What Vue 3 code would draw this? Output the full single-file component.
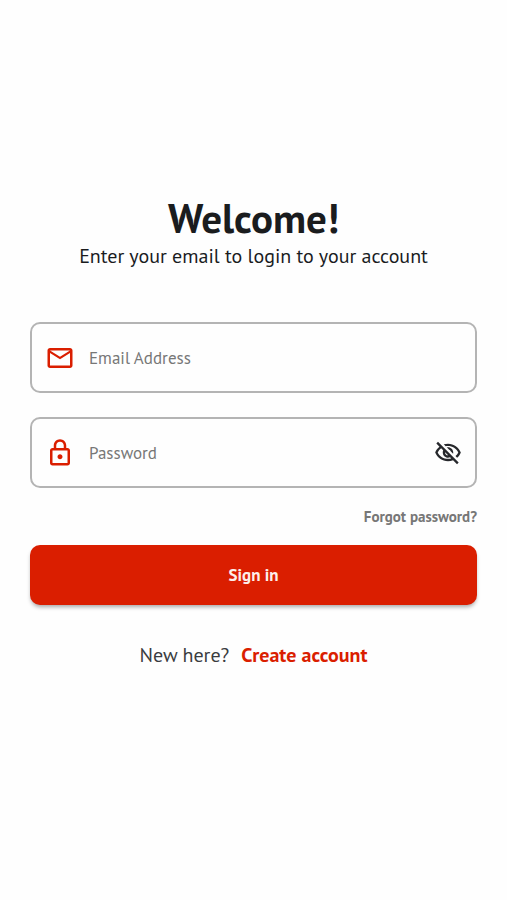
<template>
  <main class="login">
    <header class="login-header">
      <h1 class="title">Welcome!</h1>
      <p class="subtitle">Enter your email to login to your account</p>
    </header>

    <form class="login-form" @submit.prevent="signIn">
      <div class="fields">
        <label class="field">
          <svg class="icon" viewBox="0 0 24 24" aria-hidden="true">
            <path d="M22 6c0-1.1-.9-2-2-2H4c-1.1 0-2 .9-2 2v12c0 1.1.9 2 2 2h16c1.1 0 2-.9 2-2V6zm-2 0l-8 5-8-5h16zm0 12H4V8l8 5 8-5v10z" />
          </svg>
          <input v-model="email" type="email" placeholder="Email Address" aria-label="Email Address" />
        </label>

        <div class="field">
          <svg class="icon" viewBox="0 0 24 24" aria-hidden="true">
            <path d="M18 8h-1V6c0-2.76-2.24-5-5-5S7 3.24 7 6v2H6c-1.1 0-2 .9-2 2v10c0 1.1.9 2 2 2h12c1.1 0 2-.9 2-2V10c0-1.1-.9-2-2-2zM9 6c0-1.66 1.34-3 3-3s3 1.34 3 3v2H9V6zm9 14H6V10h12v10zm-6-3c1.1 0 2-.9 2-2s-.9-2-2-2-2 .9-2 2 .9 2 2 2z" />
          </svg>
          <input
            v-model="password"
            :type="showPassword ? 'text' : 'password'"
            placeholder="Password"
            aria-label="Password"
          />
          <button
            type="button"
            class="toggle-btn"
            aria-label="Toggle password visibility"
            @click="showPassword = !showPassword"
          >
            <svg viewBox="0 0 24 24" aria-hidden="true">
              <path v-if="showPassword" d="M12 6c3.79 0 7.17 2.13 8.82 5.5C19.17 14.87 15.79 17 12 17s-7.17-2.13-8.82-5.5C4.83 8.13 8.21 6 12 6m0-2C7 4 2.73 7.11 1 11.5 2.73 15.89 7 19 12 19s9.27-3.11 11-7.5C21.27 7.11 17 4 12 4zm0 5a2.5 2.5 0 0 1 0 5 2.5 2.5 0 0 1 0-5m0-2a4.5 4.5 0 1 0 0 9 4.5 4.5 0 0 0 0-9z" />
              <path v-else d="M12 6c3.79 0 7.17 2.13 8.82 5.5-.59 1.22-1.42 2.27-2.41 3.12l1.41 1.41c1.39-1.23 2.49-2.77 3.18-4.53C21.27 7.11 17 4 12 4c-1.27 0-2.49.2-3.64.57l1.65 1.65C10.66 6.09 11.32 6 12 6zm-1.07 1.14L13 9.21c.57.25 1.03.71 1.28 1.28l2.07 2.07c.08-.34.14-.7.14-1.07C16.5 9.01 14.48 7 12 7c-.37 0-.72.05-1.07.14zM2.01 3.87l2.68 2.68C3.06 7.83 1.77 9.53 1 11.5 2.73 15.89 7 19 12 19c1.52 0 2.98-.29 4.32-.82l3.42 3.42 1.41-1.41L3.42 2.45 2.01 3.87zm7.5 7.5l2.61 2.61c-.04.01-.08.02-.12.02-1.38 0-2.5-1.12-2.5-2.5 0-.05.01-.08.01-.13zm-3.4-3.4l1.75 1.75c-.23.55-.36 1.15-.36 1.78 0 2.48 2.02 4.5 4.5 4.5.63 0 1.23-.13 1.77-.36l.98.98c-.88.24-1.8.38-2.75.38-3.79 0-7.17-2.13-8.82-5.5.7-1.43 1.72-2.61 2.93-3.53z" />
            </svg>
          </button>
        </div>
      </div>

      <a class="forgot" href="#">Forgot password?</a>

      <button class="submit-btn" type="submit">Sign in</button>
    </form>

    <p class="signup">
      <span>New here?</span>
      <a href="#">Create account</a>
    </p>
  </main>
</template>

<script setup>
import { ref } from "vue";

const emit = defineEmits(["sign-in"]);

const email = ref("");
const password = ref("");
const showPassword = ref(false);

const signIn = () => {
  if (!email.value || !password.value) return;
  emit("sign-in", { email: email.value, password: password.value });
};
</script>

<style>
body {
  margin: 0;
  background: #fefefe;
}
</style>

<style scoped>
.login {
  min-height: 100vh;
  box-sizing: border-box;
  padding: 24px 30px 61px;
  display: flex;
  flex-direction: column;
  justify-content: center;
  font-family: "PT Sans", "Noto Sans", sans-serif;
  color: #1a1c1e;
}

.login-header {
  margin-bottom: 52px;
  text-align: center;
}

.title {
  margin: 0;
  font-size: 41px;
  line-height: 48px;
  font-weight: 700;
}

.subtitle {
  margin: 0;
  font-size: 20px;
  line-height: 28px;
}

.login-form {
  display: flex;
  flex-direction: column;
}

.fields {
  display: flex;
  flex-direction: column;
  gap: 24px;
  margin-bottom: 19px;
}

.field {
  display: flex;
  align-items: center;
  height: 71px;
  box-sizing: border-box;
  padding: 0 13px;
  border: 2px solid #b4b4b4;
  border-radius: 10px;
}

.field:focus-within {
  border-color: #da1e00;
}

.icon {
  flex: none;
  width: 30px;
  height: 30px;
  margin-right: 14px;
  fill: #da1e00;
}

.field input {
  flex: 1;
  min-width: 0;
  padding: 0;
  border: none;
  outline: none;
  background: transparent;
  font-family: inherit;
  font-size: 17px;
  line-height: 24px;
  color: #1a1c1e;
}

.field input::placeholder {
  color: #777;
  opacity: 1;
}

.toggle-btn {
  flex: none;
  display: flex;
  padding: 0;
  border: none;
  background: transparent;
  cursor: pointer;
}

.toggle-btn svg {
  width: 28px;
  height: 28px;
  fill: #26282c;
}

.forgot {
  align-self: flex-end;
  margin-bottom: 18px;
  font-size: 15px;
  line-height: 20px;
  font-weight: 700;
  color: #777;
  text-decoration: none;
}

.submit-btn {
  height: 60px;
  border: none;
  border-radius: 10px;
  background: #da1e00;
  box-shadow: 0 3px 4px -1px rgba(0, 0, 0, 0.35);
  font-family: inherit;
  font-size: 17px;
  font-weight: 700;
  color: #fdeeea;
  cursor: pointer;
}

.signup {
  display: flex;
  justify-content: center;
  gap: 12px;
  margin: 36px 0 0;
  font-size: 20px;
  line-height: 28px;
  color: #3a3c3f;
}

.signup a {
  font-weight: 700;
  color: #da1e00;
  text-decoration: none;
}
</style>
